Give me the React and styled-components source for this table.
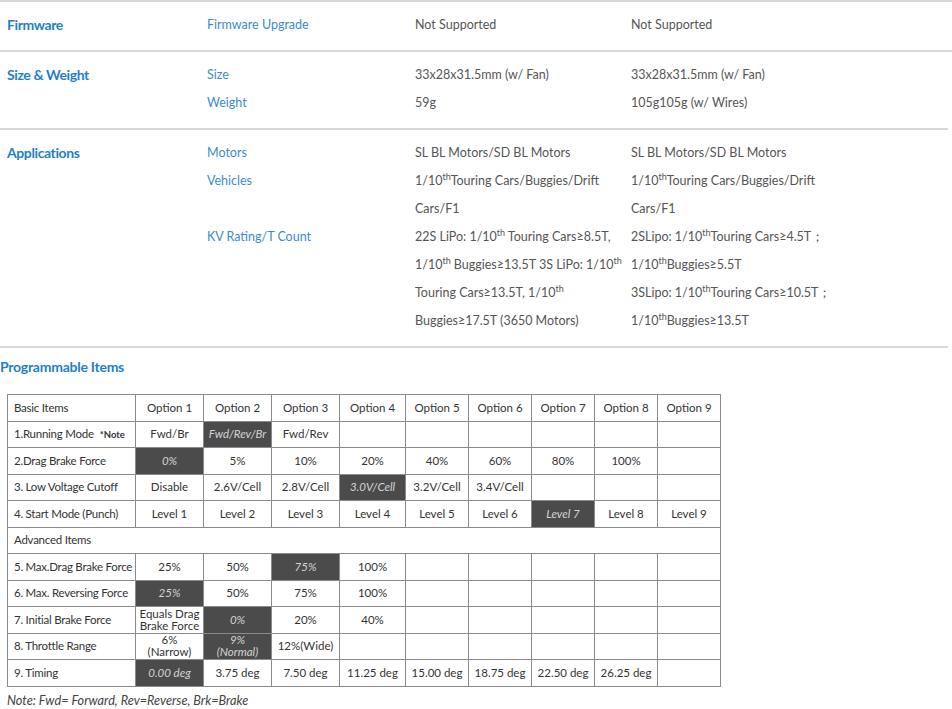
import React from "react";
import styled, { createGlobalStyle } from "styled-components";

const Global = createGlobalStyle`
  body {
    margin: 0;
    background: #fff;
    font-family: Lato, "Open Sans", sans-serif;
  }
`;

const Page = styled.div`
  width: 952px;
`;

const Section = styled.div`
  display: grid;
  grid-template-columns: 200px 208px 216px 1fr;
  border-top: 2px solid #d8d8d8;
  padding: 9px 0 11px 7px;
  &:last-of-type {
    border-bottom: 2px solid #d8d8d8;
    margin-right: 4px;
  }
`;

const Category = styled.div`
  font-weight: 700;
  font-size: 14px;
  letter-spacing: -0.4px;
  color: #1f7fc6;
  line-height: 28px;
`;

const Lines = styled.div`
  display: flex;
  flex-direction: column;
  font-size: 12.5px;
  line-height: 28px;
  white-space: nowrap;
  color: ${(p) => (p.$label ? "#3a8ccc" : "#555")};
  sup {
    font-size: 9px;
    line-height: 0;
  }
`;

const Heading = styled.h3`
  margin: 9px 0 0;
  font-size: 14px;
  font-weight: 700;
  letter-spacing: -0.25px;
  color: #1f7fc6;
  line-height: 20px;
`;

const Table = styled.table`
  margin: 17px 0 0 7px;
  width: 714px;
  border-collapse: collapse;
  font-size: 11.5px;
  color: #333;
  table-layout: fixed;
`;

const Cell = styled.td`
  border: 1px solid #8a8a8a;
  height: 25.5px;
  padding: 0;
  overflow: hidden;
  text-align: ${(p) => (p.$left ? "left" : "center")};
  padding-left: ${(p) => (p.$left ? "6px" : "0")};
  letter-spacing: ${(p) => (p.$left ? "-0.25px" : "0")};
  background: ${(p) => (p.$on ? "#4b4b4b" : "#fff")};
  color: ${(p) => (p.$on ? "#d4d4d4" : "#333")};
  font-style: ${(p) => (p.$on ? "italic" : "normal")};
  line-height: 12px;
  white-space: nowrap;
  b {
    font-size: 9.5px;
    margin-left: 6px;
    letter-spacing: 0;
  }
`;

const Note = styled.p`
  margin: 5px 0 0 7px;
  font-size: 12.7px;
  font-style: italic;
  color: #444;
`;

const Th = () => <sup>th</sup>;

const specs = [
  {
    title: "Firmware",
    rows: ["Firmware Upgrade"],
    a: ["Not Supported"],
    b: ["Not Supported"],
  },
  {
    title: "Size & Weight",
    rows: ["Size", "Weight"],
    a: ["33x28x31.5mm (w/ Fan)", "59g"],
    b: ["33x28x31.5mm (w/ Fan)", "105g105g (w/ Wires)"],
  },
  {
    title: "Applications",
    rows: ["Motors", "Vehicles", "", "KV Rating/T Count"],
    a: [
      "SL BL Motors/SD BL Motors",
      <>1/10<Th />Touring Cars/Buggies/Drift</>,
      "Cars/F1",
      <>22S LiPo: 1/10<Th /> Touring Cars≥8.5T,</>,
      <>1/10<Th /> Buggies≥13.5T 3S LiPo: 1/10<Th /></>,
      <>Touring Cars≥13.5T, 1/10<Th /></>,
      "Buggies≥17.5T (3650 Motors)",
    ],
    b: [
      "SL BL Motors/SD BL Motors",
      <>1/10<Th />Touring Cars/Buggies/Drift</>,
      "Cars/F1",
      <>2SLipo: 1/10<Th />Touring Cars≥4.5T；</>,
      <>1/10<Th />Buggies≥5.5T</>,
      <>3SLipo: 1/10<Th />Touring Cars≥10.5T；</>,
      <>1/10<Th />Buggies≥13.5T</>,
    ],
  },
];

const widths = [128, 68, 68, 68, 66, 63, 63, 63, 63, 63];

// label, option texts, selected option (1-based)
const basic = [
  [<>1.Running Mode<b>*Note</b></>, ["Fwd/Br", "Fwd/Rev/Br", "Fwd/Rev"], 2],
  ["2.Drag Brake Force", ["0%", "5%", "10%", "20%", "40%", "60%", "80%", "100%"], 1],
  ["3. Low Voltage Cutoff", ["Disable", "2.6V/Cell", "2.8V/Cell", "3.0V/Cell", "3.2V/Cell", "3.4V/Cell"], 4],
  ["4. Start Mode (Punch)", ["Level 1", "Level 2", "Level 3", "Level 4", "Level 5", "Level 6", "Level 7", "Level 8", "Level 9"], 7],
];

const advanced = [
  ["5. Max.Drag Brake Force", ["25%", "50%", "75%", "100%"], 3],
  ["6. Max. Reversing Force", ["25%", "50%", "75%", "100%"], 1],
  ["7. Initial Brake Force", [<>Equals Drag<br />Brake Force</>, "0%", "20%", "40%"], 2],
  ["8. Throttle Range", [<>6%<br />(Narrow)</>, <>9%<br />(Normal)</>, "12%(Wide)"], 2],
  ["9. Timing", ["0.00 deg", "3.75 deg", "7.50 deg", "11.25 deg", "15.00 deg", "18.75 deg", "22.50 deg", "26.25 deg"], 1],
];

function ItemRow({ label, options, on }) {
  return (
    <tr>
      <Cell $left>{label}</Cell>
      {Array.from({ length: 9 }).map((_, i) => (
        <Cell key={i} $on={i + 1 === on}>
          {options[i] || ""}
        </Cell>
      ))}
    </tr>
  );
}

export default function App() {
  return (
    <Page>
      <Global />
      {specs.map((s) => (
        <Section key={s.title}>
          <Category>{s.title}</Category>
          <Lines $label>
            {s.rows.map((r, i) => (
              <span key={i}>{r || "\u00a0"}</span>
            ))}
          </Lines>
          <Lines>
            {s.a.map((v, i) => (
              <span key={i}>{v}</span>
            ))}
          </Lines>
          <Lines>
            {s.b.map((v, i) => (
              <span key={i}>{v}</span>
            ))}
          </Lines>
        </Section>
      ))}
      <Heading>Programmable Items</Heading>
      <Table>
        <colgroup>
          {widths.map((w, i) => (
            <col key={i} style={{ width: w }} />
          ))}
        </colgroup>
        <tbody>
          <tr>
            <Cell $left>Basic Items</Cell>
            {Array.from({ length: 9 }).map((_, i) => (
              <Cell key={i}>Option {i + 1}</Cell>
            ))}
          </tr>
          {basic.map(([l, o, on], i) => (
            <ItemRow key={i} label={l} options={o} on={on} />
          ))}
          <tr>
            <Cell $left colSpan={10}>Advanced Items</Cell>
          </tr>
          {advanced.map(([l, o, on], i) => (
            <ItemRow key={i} label={l} options={o} on={on} />
          ))}
        </tbody>
      </Table>
      <Note>Note: Fwd= Forward, Rev=Reverse, Brk=Brake</Note>
    </Page>
  );
}
